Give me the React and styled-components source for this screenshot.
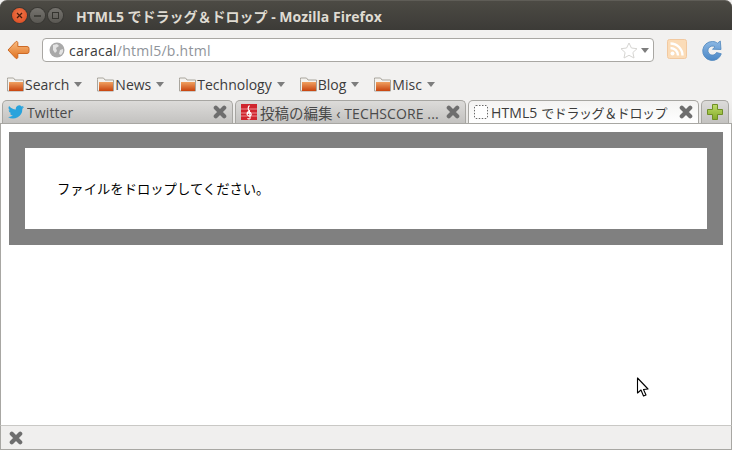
import React from "react";
import styled, { createGlobalStyle } from "styled-components";

const Global = createGlobalStyle`
  html, body { margin: 0; padding: 0; background: #fff; }
  body { width: 732px; height: 450px; overflow: hidden; }
  * { box-sizing: border-box; }
`;
const UI = `"Open Sans", "Noto Sans CJK JP", sans-serif`;

const Win = styled.div`
  position: relative; width: 732px; height: 450px; display: flex; flex-direction: column;
  font-family: ${UI}; background: #f2f1f0; overflow: hidden;
`;
const TitleBar = styled.div`
  height: 30px; flex: none; display: flex; align-items: center; padding: 0 0 0 12px;
  background: linear-gradient(#4c4a44, #3c3b37); border-top: 1px solid #5f5d57;
  border-radius: 7px 7px 0 0;
`;
const WinButtons = styled.div`display: flex; gap: 3px; margin-right: 13px;`;
const WinBtn = styled.div`
  width: 15px; height: 15px; border-radius: 50%;
  background: ${p => p.$close ? "radial-gradient(circle at 50% 40%, #f0774a, #d9461c)" : "linear-gradient(#75736e, #5a5853)"};
  box-shadow: 0 0 0 1px #3a3935; display: flex; align-items: center; justify-content: center;
`;
const Title = styled.div`
  color: #dfdbd2; font-size: 14px; font-weight: 700; white-space: nowrap;
`;
const NavBar = styled.div`
  height: 40px; flex: none; display: flex; align-items: center; padding: 0 8px 0 6px;
  background: #f2f1f0;
`;
const IconSlot = styled.div`
  display: flex; align-items: center; justify-content: center; flex: none;
  width: ${p => p.$w}px; height: 24px; margin-left: ${p => p.$ml || 0}px; margin-bottom: ${p => p.$mb || 0}px;
`;
const UrlBar = styled.div`
  margin-left: 12px; width: 612px; height: 24px; flex: none; display: flex; align-items: center;
  background: #fff; border: 1px solid #a9a7a3; border-radius: 4px; padding: 0 4px 0 6px;
  font-size: 14px; color: #8f949a; letter-spacing: .25px;
  & b { font-weight: 400; color: #3c3c3c; }
`;
const UrlText = styled.div`flex: 1; margin-left: 4px; white-space: nowrap;`;
const Bookmarks = styled.div`
  height: 30px; flex: none; display: flex; align-items: center; padding: 0 0 2px 7px; gap: 15px;
`;
const Bookmark = styled.div`
  display: flex; align-items: center; font-size: 14px; color: #3c3c3c; gap: 1px;
`;
const Caret = styled.span`
  width: 0; height: 0; margin-left: ${p => p.$ml ?? 4}px; margin-top: 1px;
  border-left: 4px solid transparent; border-right: 4px solid transparent; border-top: 5px solid #7d7d7d;
`;
const TabStrip = styled.div`
  height: 23px; flex: none; display: flex; align-items: stretch; padding-left: 2px; gap: 2px;
  background: linear-gradient(#f2f1f0, #e6e5e3);
`;
const Tab = styled.div`
  width: 231px; flex: none; display: flex; align-items: center; gap: 3px;
  padding: 0 5px 0 5px; font-size: 14px; color: ${p => p.$active ? "#3c3c3c" : "#4a4a4a"};
  border: 1px solid #a7a6a2; border-bottom: none; border-radius: 5px 5px 0 0;
  background: ${p => p.$active ? "linear-gradient(#f4f3f2, #ffffff)" : "linear-gradient(#dcdbd9, #c3c2c0)"};
  white-space: nowrap; overflow: hidden;
`;
const TabLabel = styled.span`flex: 1; overflow: hidden; letter-spacing: .1px;`;
const Cjk = styled.span`font-size: ${p => p.$size}px; letter-spacing: ${p => p.$ls || 0}px;`;
const NewTab = styled(Tab)`
  width: 28px; padding: 0; justify-content: center;
`;
const Page = styled.div`
  flex: 1; background: #fff; padding: 8px; border: 1px solid #a8a7a3; border-bottom: none;
  font-family: "Liberation Sans", "Noto Sans CJK JP", sans-serif;
`;
const DropZone = styled.div`
  border: 16px solid #808080; padding: 33px 32px 31px; font-size: 13.33px; line-height: 17px; color: #000; background: #fff;
`;
const StatusBar = styled.div`
  height: 25px; flex: none; display: flex; align-items: center; padding-left: 8px;
  background: #f0efee; border: 1px solid #a8a7a3; border-top-color: #c9c8c5;
`;
const Pointer = styled.svg`position: absolute; left: 636px; top: 377px;`;

const Folder = () => (
  <svg width="17" height="15" viewBox="0 0 17 15" style={{ flex: "none" }}>
    <defs><linearGradient id="fg" x1="0" y1="0" x2="0" y2="1"><stop offset="0" stopColor="#f0a060" /><stop offset="1" stopColor="#c8440e" /></linearGradient></defs>
    <path d="M.5 2.500V1h6l1.500 2h8.500v11H.5z" fill="#f4f2ee" stroke="#a9a59d" />
    <rect x="2" y="5" width="14" height="9" fill="url(#fg)" />
  </svg>
);
const CloseX = ({ c = "#6e6e6e" }) => (
  <svg width="14" height="14" viewBox="0 0 14 14" style={{ flex: "none" }}>
    <path d="M2.800 2.800l8.400 8.400M11.200 2.800l-8.400 8.400" stroke={c} strokeWidth="4.200" strokeLinecap="round" />
  </svg>
);
const Back = () => (
  <svg width="24" height="20" viewBox="0 0 24 20">
    <defs><linearGradient id="bk" x1="0" y1="0" x2="0" y2="1"><stop offset="0" stopColor="#f9bb80" /><stop offset="1" stopColor="#e0711f" /></linearGradient></defs>
    <path d="M10 1.500L2 10l8 8.500c1 .3 1.800-.3 1.800-1.200V13.500H21a2 2 0 0 0 2-2v-3a2 2 0 0 0-2-2h-9.200V2.700c0-.9-.8-1.500-1.800-1.200z" fill="url(#bk)" stroke="#cd6a26" strokeWidth="1" strokeLinejoin="round" />
  </svg>
);
const Globe = () => (
  <svg width="16" height="16" viewBox="0 0 16 16" style={{ flex: "none" }}>
    <circle cx="8" cy="8" r="7.500" fill="#a9a9a9" />
    <path d="M4 3l4-1 2 2-3 2 1 3-2 2-2-3zM11 8l3-1v3l-2 3-2-1z" fill="#e3e3e3" />
  </svg>
);
const Star = () => (
  <svg width="18" height="17" viewBox="0 0 18 17">
    <path d="M9 1l2.400 5 5.600.7-4.100 3.800 1.100 5.500L9 13.300 4 16l1.100-5.500L1 6.700 6.600 6z" fill="#fff" stroke="#d6d5d2" />
  </svg>
);
const Rss = () => (
  <svg width="20" height="20" viewBox="0 0 20 20">
    <rect x=".5" y=".5" width="19" height="19" rx="2" fill="#fbdcb8" stroke="#f2c9a0" />
    <circle cx="5.500" cy="14.500" r="2" fill="#fff" />
    <path d="M3.500 9a7.500 7.500 0 0 1 7.500 7.500M3.500 4.500a12 12 0 0 1 12 12" fill="none" stroke="#fff" strokeWidth="2.400" />
  </svg>
);
const Reload = () => (
  <svg width="21" height="21" viewBox="0 0 21 21">
    <defs><linearGradient id="rl" x1="0" y1="0" x2="0" y2="1"><stop offset="0" stopColor="#8db8e4" /><stop offset="1" stopColor="#4a87c6" /></linearGradient></defs>
    <path d="M10.500 1.500c2 0 3.600.6 5 1.700l2.800-2.200.7 8.500-8.500-.3 2.500-2.300a4.500 4.500 0 1 0 1.500 5.600l4.800 1.300A9.500 9.500 0 1 1 10.500 1.500z" fill="url(#rl)" stroke="#4f86bd" strokeWidth=".8" />
  </svg>
);
const Bird = () => (
  <svg width="16" height="14" viewBox="0 0 24 20" style={{ flex: "none" }}>
    <path d="M24 2.400a9.800 9.800 0 0 1-2.800.8 4.900 4.900 0 0 0 2.200-2.700 9.800 9.800 0 0 1-3.100 1.200 4.900 4.900 0 0 0-8.400 4.500A14 14 0 0 1 1.700 1a4.900 4.900 0 0 0 1.500 6.600 4.900 4.900 0 0 1-2.200-.6 4.900 4.900 0 0 0 3.900 4.900 4.900 4.900 0 0 1-2.200.1 4.900 4.900 0 0 0 4.600 3.400A9.900 9.900 0 0 1 0 17.400 14 14 0 0 0 21.500 5a10 10 0 0 0 2.500-2.600z" fill="#29a3dc" />
  </svg>
);
const ClefIcon = () => (
  <svg width="16" height="16" viewBox="0 0 16 16" style={{ flex: "none" }}>
    <rect width="16" height="16" fill="#d0252d" />
    <path d="M0 5h16M0 9h16M0 12h16" stroke="#f3a9ac" strokeWidth=".8" />
    <path d="M8.500 1.500c-2 2-2 3.500 0 6l.6 6.500c0 1.500-2.300 1.300-2.300 0M9 6.500C6 8 5 10 7 11.500s4 0 3-2-3-1-3 .5" fill="none" stroke="#fff" strokeWidth="1.100" />
  </svg>
);
const Blank = () => (
  <svg width="14" height="14" viewBox="0 0 14 14" style={{ flex: "none" }}>
    <rect x=".5" y=".5" width="13" height="13" rx="1.500" fill="#fff" stroke="#6a6a6a" strokeDasharray="1.500 1.500" />
  </svg>
);
const Plus = () => (
  <svg width="18" height="18" viewBox="0 0 18 18">
    <defs><linearGradient id="pl" x1="0" y1="0" x2="0" y2="1"><stop offset="0" stopColor="#bedc6a" /><stop offset="1" stopColor="#85ab2a" /></linearGradient></defs>
    <path d="M6.500 1.500h5v5h5v5h-5v5h-5v-5h-5v-5h5z" fill="url(#pl)" stroke="#6f8f25" strokeLinejoin="round" />
  </svg>
);

const bookmarks = ["Search", "News", "Technology", "Blog", "Misc"];

export default function App() {
  return (
    <Win>
      <Global />
      <TitleBar>
        <WinButtons>
          <WinBtn $close><svg width="7" height="7" viewBox="0 0 7 7"><path d="M1 1l5 5M6 1L1 6" stroke="#4a1c0c" strokeWidth="1.300" /></svg></WinBtn>
          <WinBtn><svg width="7" height="2" viewBox="0 0 7 2"><path d="M0 1h7" stroke="#35342f" strokeWidth="1.500" /></svg></WinBtn>
          <WinBtn><svg width="7" height="7" viewBox="0 0 7 7"><rect x=".5" y=".5" width="6" height="6" fill="none" stroke="#35342f" /></svg></WinBtn>
        </WinButtons>
        <Title>HTML5 でドラッグ＆ドロップ - Mozilla Firefox</Title>
      </TitleBar>
      <NavBar>
        <IconSlot $w={24}><Back /></IconSlot>
        <UrlBar>
          <Globe />
          <UrlText><b>caracal</b>/html5/b.html</UrlText>
          <Star />
          <Caret $ml={3} />
        </UrlBar>
        <IconSlot $w={20} $ml={13} $mb={2}><Rss /></IconSlot>
        <IconSlot $w={21} $ml={15}><Reload /></IconSlot>
      </NavBar>
      <Bookmarks>
        {bookmarks.map(b => (
          <Bookmark key={b}><Folder />{b}<Caret /></Bookmark>
        ))}
      </Bookmarks>
      <TabStrip>
        <Tab><Bird /><TabLabel>Twitter</TabLabel><CloseX /></Tab>
        <Tab><ClefIcon /><TabLabel><Cjk $size={14.5}>投稿の編集</Cjk> ‹ TECHSCORE ...</TabLabel><CloseX /></Tab>
        <Tab $active><Blank /><TabLabel>HTML5 <Cjk $size={13} $ls={-.4}>でドラッグ＆ドロップ</Cjk></TabLabel><CloseX /></Tab>
        <NewTab><Plus /></NewTab>
      </TabStrip>
      <Page>
        <DropZone>ファイルをドロップしてください。</DropZone>
      </Page>
      <StatusBar><CloseX /></StatusBar>
      <Pointer width="15" height="21" viewBox="0 0 15 21">
        <path d="M1.500 1v15l3.500-3 2.500 6 2.500-1-2.500-5.500 4.500-.5z" fill="#fff" stroke="#000" strokeWidth="1.100" strokeLinejoin="round" />
      </Pointer>
    </Win>
  );
}
